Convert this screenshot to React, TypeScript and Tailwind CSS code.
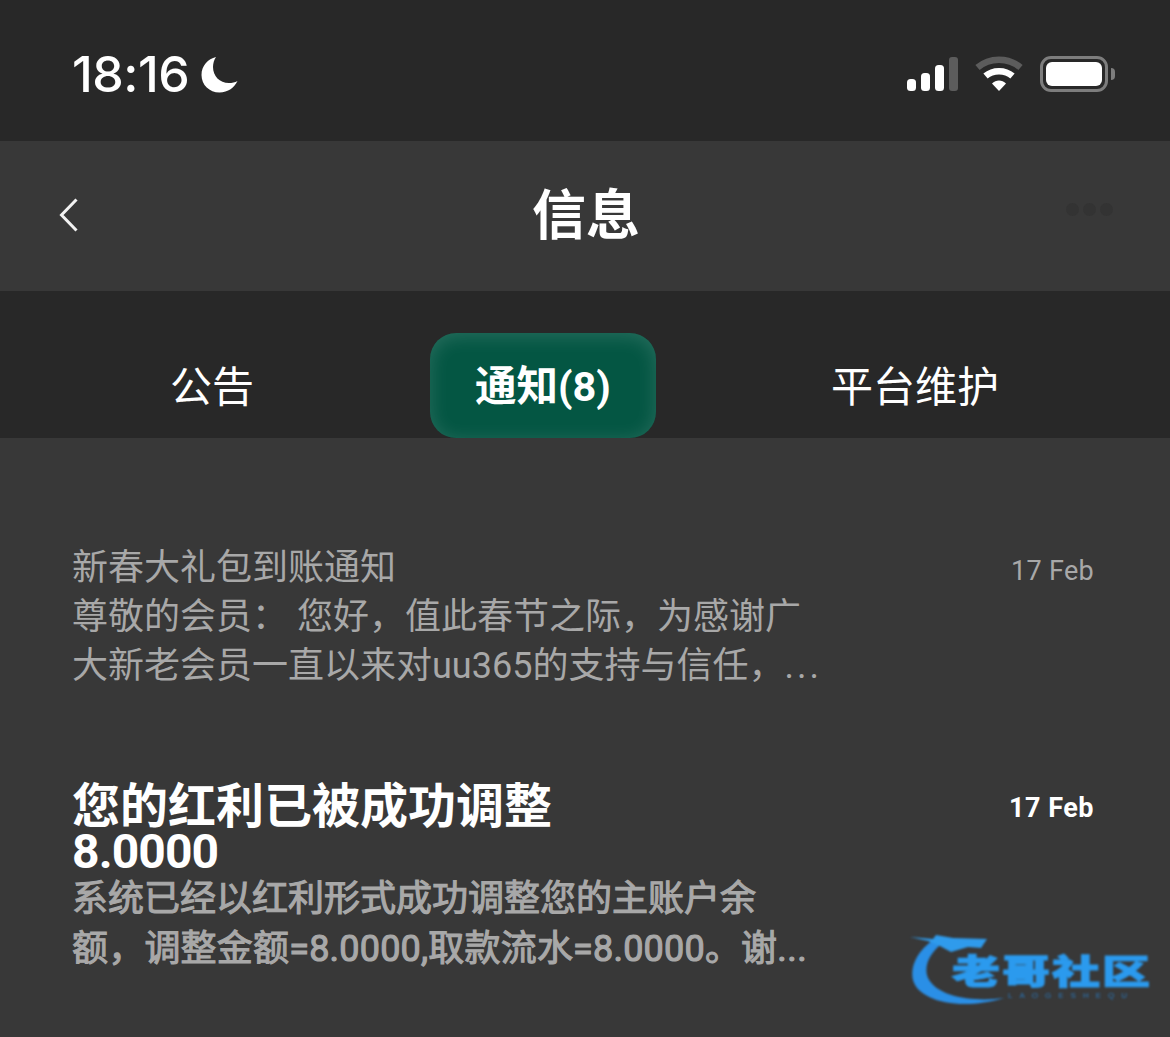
const cjk = 'font-["Roboto","Noto_Sans_CJK_SC",sans-serif]';

function StatusIcons() {
  return (
    <div className="flex items-start">
      <svg width="51" height="36" viewBox="0 0 51 36" className="mr-[17px]">
        <rect x="0" y="23" width="9" height="12" rx="3.5" fill="#fff" />
        <rect x="14" y="17" width="9" height="18" rx="3.5" fill="#fff" />
        <rect x="28" y="9" width="9" height="26" rx="3.5" fill="#fff" />
        <rect x="42" y="1" width="9" height="34" rx="3" fill="#5c5c5c" />
      </svg>
      <svg width="48" height="36" viewBox="0 0 48 36" className="mr-[17px]">
        <path d="M2.5 11.5 C14.5 1 33.5 1 45.5 11.5" fill="none" stroke="#5c5c5c" strokeWidth="6.5" />
        <path d="M10.5 20 C18 13.5 30 13.5 37.5 20" fill="none" stroke="#fff" strokeWidth="6.5" />
        <path d="M17 27.5 C21 23.5 27 23.5 31 27.5 L24 35 Z" fill="#fff" />
      </svg>
      <div className="w-[68px] h-[36px] rounded-[11px] border-[3px] border-[#7d7d7d] p-[3px]">
        <div className="w-full h-full rounded-[6px] bg-white" />
      </div>
      <div className="ml-[3px] mt-[12px] w-[4px] h-[12px] rounded-r-full bg-[#7d7d7d]" />
    </div>
  );
}

function StatusBar() {
  return (
    <div className="h-[141px] bg-[#282828] flex justify-between pt-[56px] pl-[72px] pr-[55px]">
      <div className="flex h-[36px] items-center text-white">
        <span className='font-["Inter",sans-serif] text-[50px] font-medium tracking-[-0.5px] leading-none'>18:16</span>
        <svg width="37" height="37" viewBox="0 0 37 37" className="ml-[12px]">
          <path d="M15 1 C7 3 0.5 9.5 0.5 19 C0.5 29 8.5 36.5 18.5 36.5 C27 36.5 33.5 31.5 36.5 25 C34 26.5 31 27 28 27 C18.5 27 12 20 12 11 C12 7.5 13 4 15 1 Z" fill="#fff" />
        </svg>
      </div>
      <StatusIcons />
    </div>
  );
}

function NavBar() {
  return (
    <div className={`h-[150px] bg-[#383838] flex items-center pl-[59px] pr-[57px] ${cjk}`}>
      <div className="flex-1 flex">
        <svg width="20" height="36" viewBox="0 0 20 36" className="-mt-[2px]">
          <path d="M17.5 2.5 L2.5 18 L17.5 33.5" fill="none" stroke="#f2f2f2" strokeWidth="3" />
        </svg>
      </div>
      <h1 className="text-[54px] leading-none font-bold text-white mt-[1px]">信息</h1>
      <div className="flex-1 flex justify-end gap-[4px] -mt-[14px]">
        <div className="w-[13px] h-[13px] rounded-full bg-[#333333]" />
        <div className="w-[13px] h-[13px] rounded-full bg-[#333333]" />
        <div className="w-[13px] h-[13px] rounded-full bg-[#333333]" />
      </div>
    </div>
  );
}

function Tabs() {
  return (
    <div className={`h-[147px] bg-[#282828] flex items-end text-white text-[42px] ${cjk}`}>
      <div className="w-[424px] h-[105px] pt-[3px] flex items-center justify-center">公告</div>
      <div className="ml-[6px] w-[226px] h-[105px] pt-[3px] rounded-[26px] bg-[#045643] shadow-[inset_0_3px_20px_rgba(255,255,255,0.15)] flex items-center justify-center font-bold text-[41.5px]">
        通知(8)
      </div>
      <div className="w-[514px] h-[105px] pt-[3px] pl-[4px] flex items-center justify-center">平台维护</div>
    </div>
  );
}

interface MessageProps {
  title: string;
  amount?: string;
  lines: string[];
  date: string;
  unread?: boolean;
}

function Message({ title, amount, lines, date, unread }: MessageProps) {
  return (
    <div className="flex justify-between pl-[72px] pr-[76px]">
      <div>
        <div className={unread ? 'text-[48px] leading-[45px] font-bold text-white' : 'text-[36px] leading-[49px] text-[#a8a8a8]'}>
          {title}
          {amount && <div className="tracking-[-0.9px]">{amount}</div>}
        </div>
        {lines.map((line, i) => {
          const last = i === lines.length - 1;
          return (
            <div
              key={i}
              className={`text-[36px] text-[#a8a8a8] whitespace-nowrap ${unread ? 'leading-[50px] [-webkit-text-stroke:1.1px_#a8a8a8]' : 'leading-[49px]'} ${unread && last ? 'tracking-[0.2px]' : ''}`}
            >
              {line}
              {last && <span className={unread ? 'tracking-[0.5px]' : 'tracking-[3px]'}>...</span>}
            </div>
          );
        })}
      </div>
      <div className={`text-[27px] leading-none ${unread ? 'text-white font-bold mt-[11px] tracking-[0.5px]' : 'text-[#a8a8a8] mt-[14px] tracking-[0.3px]'}`}>
        {date}
      </div>
    </div>
  );
}

function Watermark() {
  return (
    <div className="absolute left-[908px] top-[932px] w-[246px] h-[76px] blur-[1px]">
      <svg width="100" height="76" viewBox="0 0 100 76" className="absolute left-0 top-0">
        <path d="M25 8 C8 20 2 36 5 48 C10 68 50 80 96 66 C68 70 30 66 20 46 C15 34 22 20 36 10 Z" fill="#2a8fe6" />
        <path d="M2 5 L25 7 L28 3 L45 6 L79 7 L73 16 L60 15 L43 20 L30 13 L20 9 Z" fill="#2f9bec" />
      </svg>
      <div className={`absolute left-[44px] top-[16px] w-[198px] flex justify-between text-[48px] leading-none font-black text-[#2b9aee] scale-y-[0.72] [-webkit-text-stroke:1.5px_#2b9aee] ${cjk}`}>
        <span>老</span>
        <span>哥</span>
        <span>社</span>
        <span>区</span>
      </div>
      <div className='absolute left-[100px] top-[60px] text-[8px] leading-none tracking-[7px] text-[#2a78bc] font-["Liberation_Sans",sans-serif]'>
        LAOGESHEQU
      </div>
    </div>
  );
}

export default function App() {
  return (
    <div className="relative w-[1170px] h-[1037px] overflow-hidden bg-[#383838]">
      <StatusBar />
      <NavBar />
      <Tabs />
      <div className={`pt-[106px] flex flex-col gap-[93px] ${cjk}`}>
        <Message
          title="新春大礼包到账通知"
          lines={['尊敬的会员： 您好，值此春节之际，为感谢广', '大新老会员一直以来对uu365的支持与信任，']}
          date="17 Feb"
        />
        <Message
          title="您的红利已被成功调整"
          amount="8.0000"
          lines={['系统已经以红利形式成功调整您的主账户余', '额，调整金额=8.0000,取款流水=8.0000。谢']}
          date="17 Feb"
          unread
        />
      </div>
      <Watermark />
    </div>
  );
}
